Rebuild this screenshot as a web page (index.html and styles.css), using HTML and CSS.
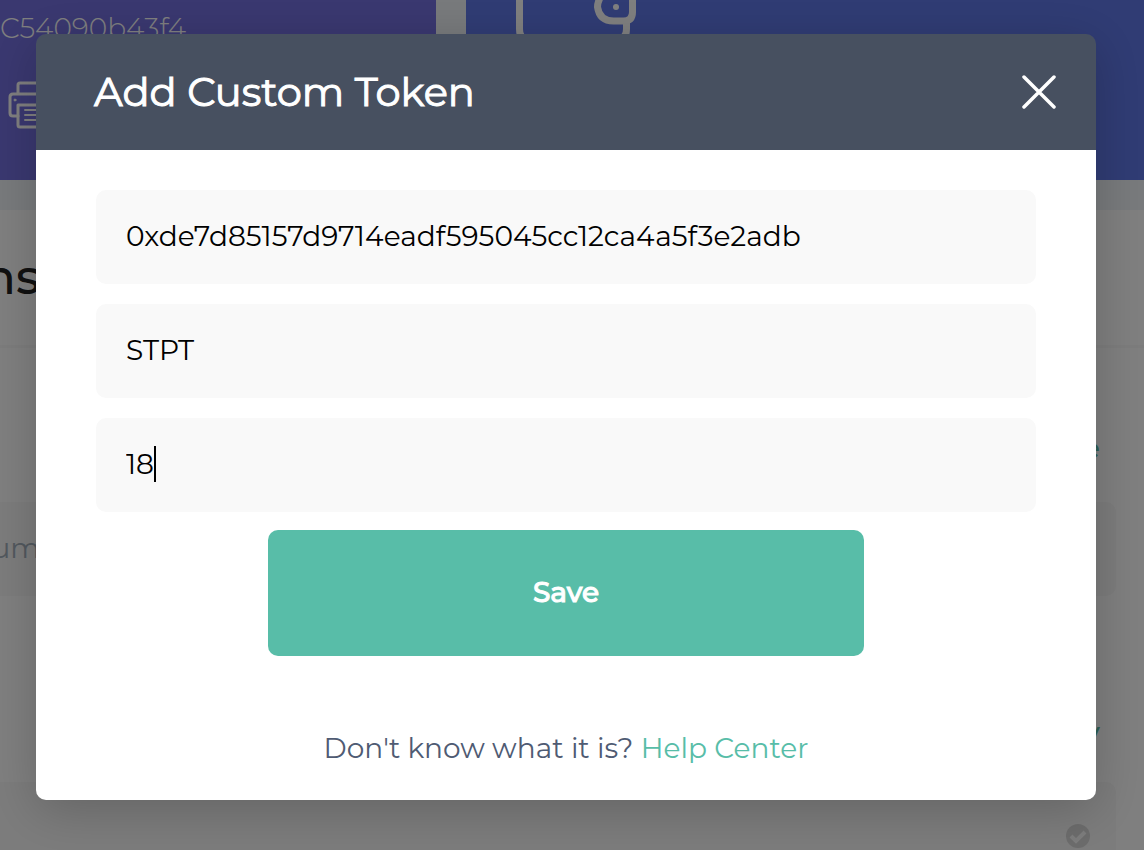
FILE: index.html
```html
<!DOCTYPE html>
<html lang="en">
<head>
    <meta charset="UTF-8">
    <meta name="viewport" content="width=device-width, initial-scale=1.0">
    <title>Add Custom Token</title>
    <link rel="stylesheet" href="styles.css">
</head>
<body>
    <div class="page">
        <div class="cards">
            <div class="card address-card">
                <div class="address">C54090b43f4</div>
                <svg class="printer" viewBox="0 0 54 48" fill="none" stroke="#fff" stroke-width="3" stroke-linejoin="round" stroke-linecap="round">
                    <path d="M10 12V4q0-2 2-2h30q2 0 2 2v8"/>
                    <path d="M10 35H5q-3 0-3-3V16q0-3 3-3h44q3 0 3 3v16q0 3-3 3h-5"/>
                    <path d="M10 24h34v20q0 2-2 2H12q-2 0-2-2z"/>
                    <path d="M17 29h20M17 34h20M17 39h20" stroke-width="2"/>
                    <circle cx="7" cy="19" r="1" stroke-width="1" fill="#fff"/>
                </svg>
            </div>
            <div class="card balance-card">
                <svg class="wallet" viewBox="0 0 126 36" fill="none" stroke="#fff">
                    <path d="M3.500 0v29q0 10 8 10h90q9 0 9-10v-8" stroke-width="7"/>
                    <path d="M85 -4Q81.500 2 81.500 7q2 14 16 14h10q9 0 9-9V-4" stroke-width="7"/>
                    <circle cx="100" cy="7" r="3" fill="#fff" stroke="none"/>
                </svg>
            </div>
        </div>
        <div class="panel">
            <h2 class="panel-title"><span>ns</span></h2>
            <div class="row"><a href="#">e</a></div>
            <div class="panel-box"><span>um</span></div>
            <div class="row copy-row"><a href="#">y</a></div>
            <div class="panel-box">
                <svg class="check" viewBox="0 0 24 24">
                    <circle cx="12" cy="12" r="12" fill="#d8d8d8"/>
                    <path d="M5 12l5 5 9-9" fill="none" stroke="#f8f8f8" stroke-width="4"/>
                </svg>
            </div>
        </div>
    </div>

    <div class="overlay">
        <form class="modal" role="dialog" aria-labelledby="modalTitle">
            <div class="modal-header">
                <h1 id="modalTitle">Add Custom Token</h1>
                <button type="button" class="close" aria-label="Close">
                    <svg viewBox="0 0 34 34" fill="none" stroke="#fff" stroke-width="3.500" stroke-linecap="round">
                        <path d="M2 2l30 30M32 2L2 32"/>
                    </svg>
                </button>
            </div>
            <div class="modal-body">
                <div class="field"><input type="text" aria-label="Contract address" value="0xde7d85157d9714eadf595045cc12ca4a5f3e2adb"></div>
                <div class="field"><input type="text" aria-label="Symbol" value="STPT"></div>
                <div class="field"><input type="text" aria-label="Decimals" value="18"><span class="caret"></span></div>
                <button type="button" class="save">Save</button>
                <p class="help">Don't know what it is? <a href="#">Help Center</a></p>
            </div>
        </form>
    </div>
</body>
</html>
```

FILE: styles.css
```css
* {
    box-sizing: border-box;
}
body {
    font-family: Montserrat, Inter, sans-serif;
    font-size: 28px;
    line-height: 36px;
    margin: 0;
    background: #f0f4f8;
    overflow: hidden;
}
a {
    color: #58bda8;
    text-decoration: none;
}
button {
    font-family: inherit;
    border: none;
    cursor: pointer;
}
.page {
    height: 100vh;
    overflow: hidden;
}
.cards {
    display: flex;
    gap: 30px;
    height: 180px;
}
.card {
    color: #fff;
}
.address-card {
    flex: 0 0 436px;
    padding-top: 10px;
    background: #7470e0;
}
.address {
    font-weight: 300;
}
.printer {
    display: block;
    width: 54px;
    height: 48px;
    margin: 35px 0 0 8px;
}
.balance-card {
    flex: 1;
    padding-left: 50px;
    background: #6078e8;
}
.wallet {
    display: block;
    width: 126px;
    height: 36px;
}
.panel {
    margin-top: 30px;
    background: #fff;
}
.panel-title,
.panel-box {
    display: flex;
}
.panel-title span,
.panel-box span {
    display: flex;
    justify-content: flex-end;
    width: 40px;
}
.panel-title {
    height: 138px;
    margin: 0;
    padding-top: 37px;
    border-bottom: 3px solid #f8f8f8;
    font-size: 48px;
    font-weight: 500;
    line-height: 60px;
    color: #222;
}
.row {
    height: 154px;
    padding: 82px 44px 0 0;
    text-align: right;
    font-weight: 500;
}
.copy-row {
    height: 186px;
    padding-top: 118px;
}
.panel-box {
    height: 94px;
    margin-right: 28px;
    padding: 28px 26px 28px 0;
    border-radius: 0 10px 10px 0;
    background: #f8f8f8;
    color: #a4b0bc;
}
.check {
    display: block;
    width: 24px;
    height: 24px;
    margin: 14px 0 0 auto;
}
.overlay {
    position: fixed;
    inset: 0;
    padding: 34px 48px 50px 36px;
    background: rgba(0, 0, 0, 0.5);
}
.modal {
    border-radius: 10px;
    box-shadow: 0 10px 50px rgba(0, 0, 0, 0.2);
}
.modal-header {
    display: flex;
    align-items: center;
    justify-content: space-between;
    height: 116px;
    padding: 0 40px 0 58px;
    border-radius: 10px 10px 0 0;
    background: #475060;
    color: #fff;
}
.modal-header h1 {
    margin: 0;
    font-size: 40px;
    font-weight: 400;
    line-height: 48px;
    -webkit-text-stroke: 1px #fff;
}
.close {
    width: 34px;
    height: 34px;
    padding: 0;
    background: none;
}
.close svg {
    display: block;
}
.modal-body {
    padding: 40px 60px 34px;
    border-radius: 0 0 10px 10px;
    background: #fff;
}
.field {
    position: relative;
    margin-bottom: 20px;
}
.field input {
    display: block;
    width: 100%;
    height: 94px;
    padding: 0 30px 2px;
    border: none;
    border-radius: 10px;
    outline: none;
    background: #f9f9f9;
    font: inherit;
    color: #000;
}
.caret {
    position: absolute;
    top: 28px;
    left: 58px;
    width: 2px;
    height: 36px;
    background: #000;
}
.save {
    display: block;
    width: 596px;
    max-width: 100%;
    height: 126px;
    margin: -2px auto 0;
    padding: 0 0 2px;
    border-radius: 10px;
    background: #58bda8;
    font-size: 28px;
    font-weight: 500;
    color: #fff;
    -webkit-text-stroke: 1px #fff;
}
.help {
    margin: 74px 0 0;
    text-align: center;
    color: #4f5b73;
}
```
